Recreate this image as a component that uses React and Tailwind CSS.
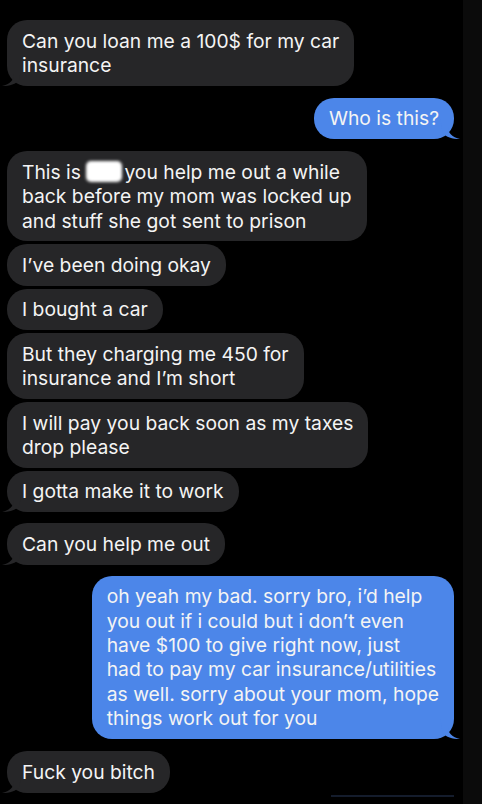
import React from 'react'

const font = { fontFamily: 'Inter, "Noto Sans", sans-serif' }

const Tail = ({ side }) => {
  if (side === 'left') {
    return (
      <svg className="absolute -left-[5px] bottom-0" width="20" height="20" viewBox="0 0 20 20">
        <path d="M12 0 L12 8 C12 14 8 18 0 20 C8 20 14 18 17 14 L20 0 Z" fill="#262628" />
      </svg>
    )
  }
  return (
    <svg className="absolute -right-[6px] bottom-0" width="20" height="20" viewBox="0 0 20 20">
      <path d="M8 0 L8 8 C8 14 12 18 20 20 C12 20 6 18 3 14 L0 0 Z" fill="#4c86e9" />
    </svg>
  )
}

const Bubble = ({ side = 'left', tail, lines, className = '' }) => {
  const isLeft = side === 'left'
  return (
    <div className={`flex ${isLeft ? 'justify-start' : 'justify-end'} ${className}`}>
      <div
        className={`relative rounded-[20px] px-[15px] py-[8.5px] text-[19.3px] leading-[24.4px] text-[#f4f4f4] whitespace-nowrap ${
          isLeft ? 'bg-[#262628]' : 'bg-[#4c86e9]'
        }`}
      >
        {tail && <Tail side={side} />}
        <div className="relative">
          {lines.map((line, i) => (
            <div key={i}>{line}</div>
          ))}
        </div>
      </div>
    </div>
  )
}

const Censored = () => (
  <span className="inline-block align-middle w-[36px] h-[21px] -mt-[3px] mr-[2px] rounded-[5px] bg-white blur-[1.5px]" />
)

export default function App() {
  return (
    <div className="w-[482px] h-[804px] bg-black flex overflow-hidden" style={font}>
      <div className="w-[463px] flex flex-col pt-[20px] pl-[7px] pr-[9px]">
        <Bubble tail lines={['Can you loan me a 100$ for my car', 'insurance']} />
        <Bubble side="right" tail className="mt-[12px]" lines={['Who is this?']} />
        <Bubble
          className="mt-[12px]"
          lines={[
            <span key="a">This is <Censored />you help me out a while</span>,
            'back before my mom was locked up',
            'and stuff she got sent to prison',
          ]}
        />
        <Bubble className="mt-[3px]" lines={['I\u2019ve been doing okay']} />
        <Bubble className="mt-[3px]" lines={['I bought a car']} />
        <Bubble className="mt-[3px]" lines={['But they charging me 450 for', 'insurance and I\u2019m short']} />
        <Bubble className="mt-[3px]" lines={['I will pay you back soon as my taxes', 'drop please']} />
        <Bubble tail className="mt-[3px]" lines={['I gotta make it to work']} />
        <Bubble tail className="mt-[11px]" lines={['Can you help me out']} />
        <Bubble
          side="right"
          tail
          className="mt-[11px]"
          lines={[
            'oh yeah my bad. sorry bro, i\u2019d help',
            'you out if i could but i don\u2019t even',
            'have $100 to give right now, just',
            'had to pay my car insurance/utilities',
            'as well. sorry about your mom, hope',
            'things work out for you',
          ]}
        />
        <Bubble tail className="mt-[12px]" lines={['Fuck you bitch']} />
        <div className="mt-[2px] ml-auto w-[123px] h-[2px] bg-[#141c2c]" />
      </div>
      <div className="flex-1 bg-[#0b0b0b]" />
    </div>
  )
}
